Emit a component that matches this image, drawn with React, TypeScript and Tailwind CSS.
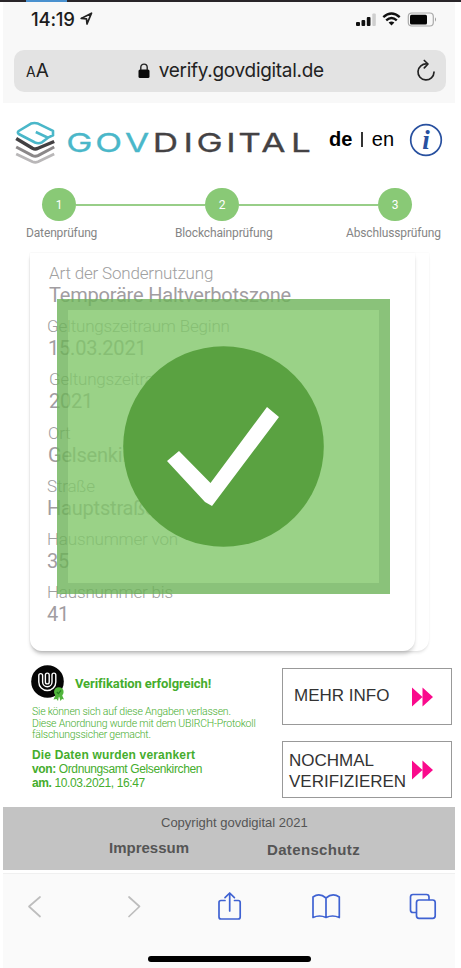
import React from "react";

type Field = { label: string; value: string; lx: string; vx: string };

const fields: Field[] = [
  { label: "Art der Sondernutzung", value: "Temporäre Haltverbotszone", lx: "pl-[19px]", vx: "pl-[19px]" },
  { label: "Geltungszeitraum Beginn", value: "15.03.2021", lx: "pl-[17px]", vx: "pl-[18px]" },
  { label: "Geltungszeitraum Ende", value: "2021", lx: "pl-[19px]", vx: "pl-[19px]" },
  { label: "Ort", value: "Gelsenkirchen", lx: "pl-[18px]", vx: "pl-[18px]" },
  { label: "Straße", value: "Hauptstraße", lx: "pl-[17px]", vx: "pl-[17px]" },
  { label: "Hausnummer von", value: "35", lx: "pl-[17px]", vx: "pl-[17px]" },
  { label: "Hausnummer bis", value: "41", lx: "pl-[17px]", vx: "pl-[17px]" },
];

function StatusBar() {
  return (
    <div className="flex h-[35px] items-center pl-[28px] pr-[17px]">
      <span className="text-[18.5px] leading-[35px] font-medium tracking-[-0.2px] text-[#1c1c1c]">14:19</span>
      <svg className="ml-[5px]" width="13" height="14" viewBox="0 0 13 14" fill="none">
        <path d="M1.2 6.4 L11.5 1.2 L7 12 L6.5 6.9 Z" stroke="#222" strokeWidth="1.7" strokeLinejoin="round" />
      </svg>
      <svg className="ml-auto" width="84" height="18" viewBox="0 0 84 18">
        <rect x="2" y="12" width="4" height="4" rx="1" fill="#111" />
        <rect x="7.5" y="10" width="3.7" height="6" rx="1" fill="#111" />
        <rect x="12.8" y="7" width="3.7" height="9" rx="1" fill="#111" />
        <rect x="18.3" y="3.5" width="3.5" height="12.5" rx="1" fill="#cfcfcf" />
        <g fill="none" stroke="#111" strokeWidth="2.4">
          <path d="M29.3 7.2 Q37.5 -0.2 45.7 7.2" />
          <path d="M32.2 10.4 Q37.5 5.6 42.8 10.4" />
        </g>
        <path d="M34.6 12.6 Q37.5 10.2 40.4 12.6 L37.5 15.6 Z" fill="#111" />
        <rect x="54.3" y="3" width="25" height="13" rx="3.5" fill="#f8f8f8" stroke="#aaa" strokeWidth="1.2" />
        <rect x="56" y="4.8" width="17" height="9.6" rx="1.5" fill="#050505" />
        <path d="M81 7.3 q2 2.2 0 4.4 z" fill="#999" />
      </svg>
    </div>
  );
}

function AddressBar() {
  return (
    <div className="mx-[11px] mt-[13px] mr-[9px] flex h-[42px] items-center rounded-[10px] bg-[#e3e3e3] pr-[10px] pl-[12px] text-[#222]">
      <span className="flex items-baseline">
        <span className="text-[14px] leading-none">A</span>
        <span className="text-[19px] leading-none">A</span>
      </span>
      <svg className="ml-[89px]" width="12" height="16" viewBox="0 0 12 16">
        <rect x="0.5" y="6.5" width="11" height="8.5" rx="1.5" fill="#0a0a0a" />
        <path d="M2.8 7 V4.3 a3.2 3.2 0 0 1 6.4 0 V7" fill="none" stroke="#222" strokeWidth="1.4" />
      </svg>
      <span className="ml-[9px] text-[19px] leading-[42px] tracking-[-0.3px] whitespace-nowrap">verify.govdigital.de</span>
      <svg className="ml-auto" width="20" height="24" viewBox="0 0 20 24" fill="none" stroke="#222" strokeWidth="1.7" strokeLinecap="round" strokeLinejoin="round">
        <path d="M10.8 5 A8 8 0 1 0 18 13.2" />
        <path d="M8.3 1.500 L12 5 L8.300 8.800" />
      </svg>
    </div>
  );
}

function Logo() {
  return (
    <svg width="300" height="48" viewBox="14 118 300 48" className="shrink-0">
      <g fill="none" strokeLinejoin="round">
        <path d="M16.2 154 L32.5 161.8 Q35.3 163 38 161.800 L54.2 154" stroke="#b9b7b8" strokeWidth="2.8" />
        <path d="M16.2 147 L32.5 155.6 Q35.3 156.900 38 155.600 L54.2 147" stroke="#8b8889" strokeWidth="3" />
        <path d="M16.2 138.500 L32.5 148.300 Q35.3 149.700 38 148.300 L54.2 141.500" stroke="#424042" strokeWidth="3.4" />
        <path d="M53 136 V130.800 L38 123.600 Q34.500 122.500 31 123.600 L18.700 131 Q17 132.400 18.700 134 L35 142.500 Q38.500 144 42 142.300 L48 137.700 L35.800 132 M48 137.700 L53.500 135" stroke="#4ab7c9" strokeWidth="2.6" />
      </g>
      <g fontFamily="Inter, sans-serif" fontSize="26" fontWeight="400" transform="scale(1.35 1)">
        <text x="49 70.6 92.6" y="152.2" fill="#4ab7c9" stroke="#4ab7c9" strokeWidth="0.3">GOV</text>
        <text x="113.2 136 145.6 167.600 176.500 193.600 215.600" y="152.2" fill="#444244" stroke="#444244" strokeWidth="0.3">DIGITAL</text>
      </g>
    </svg>
  );
}

function Brand() {
  return (
    <div className="flex h-[76px] pt-[6px] pl-[11px]">
      <Logo />
      <div className="ml-[15px] flex h-[42px] items-center gap-[9px] font-['Liberation_Sans',Arial,sans-serif] text-[20px] text-black">
        <span className="font-bold">de</span>
        <span className="h-[15px] w-[1.5px] bg-[#333]" />
        <span>en</span>
      </div>
      <svg className="mt-[4px] ml-[14px] shrink-0" width="36" height="36" viewBox="0 0 36 36">
        <circle cx="18" cy="18" r="15.3" fill="none" stroke="#28509f" strokeWidth="1.7" />
        <text x="18" y="26.5" textAnchor="middle" fill="#28509f" fontFamily="'Liberation Serif', serif" fontStyle="italic" fontWeight="700" fontSize="27">i</text>
      </svg>
    </div>
  );
}

function Dot({ n }: { n: number }) {
  return (
    <span className="flex h-[33px] w-[34px] shrink-0 items-center justify-center rounded-full bg-[#89c976] pt-px text-[12px] text-white">{n}</span>
  );
}

function Stepper() {
  return (
    <div className="font-[Roboto,sans-serif]">
      <div className="flex h-[33px] items-center pl-[39px]">
        <Dot n={1} />
        <span className="h-[2px] w-[129px] bg-[#98ce88]" />
        <Dot n={2} />
        <span className="h-[2px] w-[139px] bg-[#98ce88]" />
        <Dot n={3} />
      </div>
      <div className="mt-[4px] flex h-[16px] text-[12px] leading-[16px] tracking-[-0.14px] whitespace-nowrap text-[#858585]">
        <span className="ml-[23px] w-[149px]">Datenprüfung</span>
        <span className="w-[171px]">Blockchainprüfung</span>
        <span>Abschlussprüfung</span>
      </div>
    </div>
  );
}

function ResultCard() {
  return (
    <div className="relative mt-[12px] ml-[27px] h-[398px] w-[399px] rounded-b-[12px] bg-white shadow-[0_3px_3px_-1px_rgba(0,0,0,0.1),0_0_2px_rgba(0,0,0,0.05)]">
      <div className="h-[398px] w-[385px] rounded-b-[12px] bg-white pt-[10px] font-[Roboto,sans-serif] whitespace-nowrap shadow-[0_4px_4px_-1px_rgba(0,0,0,0.18),0_0_2px_rgba(0,0,0,0.06)]">
        {fields.map((f) => (
          <div key={f.label} className="h-[53.2px]">
            <div className={`h-[21px] text-[17px] leading-[21px] font-light tracking-[-0.18px] text-[#a0a0a0] ${f.lx}`}>{f.label}</div>
            <div className={`text-[20px] leading-[22px] tracking-[-0.2px] text-[#a19da1] ${f.vx}`}>{f.value}</div>
          </div>
        ))}
      </div>
      <div className="absolute top-[46px] left-[27px] h-[295px] w-[333px] border-[11px] border-[#6db359] bg-[#81c76a] opacity-80" />
      <svg className="absolute top-[93px] left-[93px]" width="202" height="202" viewBox="123 346 202 202">
        <circle cx="223.5" cy="446.5" r="100.3" fill="#5aa241" />
        <path d="M167 461 L179 451 L210.5 483 L267 407 L279 417 L212 506 L205 502 Z" fill="#fff" />
      </svg>
    </div>
  );
}

function UbirchBadge() {
  return (
    <svg width="36" height="36" viewBox="0 0 36 36" className="shrink-0">
      <circle cx="16.5" cy="16.5" r="16.3" fill="#050505" />
      <g fill="none" strokeLinecap="round">
        <path d="M9.700 10.5 V17 a6.600 6.600 0 0 0 13.200 0 V10 M16.300 10 V17" stroke="#fff" strokeWidth="5.200" />
        <path d="M9.700 10.5 V17 a6.600 6.600 0 0 0 13.200 0 V10 M16.300 10 V17" stroke="#050505" strokeWidth="2.400" />
      </g>
      <path d="M25 29 L22.5 34.5 L25.5 34 L27 36 L28 31 L29.5 36 L31 34 L33 34.5 L30.5 29 Z" fill="#50b53b" />
      <circle cx="27.8" cy="27" r="4.8" fill="#50b53b" />
      <path d="M25.8 27 L27.4 28.6 L30 25.4" fill="none" stroke="#247c20" strokeWidth="1.2" />
    </svg>
  );
}

function Arrows() {
  return (
    <svg width="21" height="20" viewBox="0 0 21 20" fill="#fa0a8c">
      <path d="M0 0.5 L10.5 10 L0 19.5 Z M10.5 0.5 L21 10 L10.5 19.5 Z" />
    </svg>
  );
}

function Verification() {
  return (
    <div className="mt-[14px] flex h-[142px] pl-[28px] text-[#45ad2d]">
      <div className="w-[251px] whitespace-nowrap">
        <div className="flex items-center font-[Roboto,sans-serif]">
          <UbirchBadge />
          <span className="ml-[8px] pt-[2px] text-[13px] font-bold tracking-[-0.1px]">Verifikation erfolgreich!</span>
        </div>
        <div className="mt-[5px] pl-[1px] font-[Roboto,sans-serif] text-[10.5px] leading-[11.5px] font-light tracking-[-0.22px]">
          <div>Sie können sich auf diese Angaben verlassen.</div>
          <div>Diese Anordnung wurde mit dem UBIRCH-Protokoll</div>
          <div>fälschungssicher gemacht.</div>
        </div>
        <div className="mt-[7px] pl-[1px] font-['Liberation_Sans',Arial,sans-serif] text-[12px] leading-[14px] tracking-[-0.38px]">
          <div className="font-bold tracking-[0.17px]">Die Daten wurden verankert</div>
          <div><b>von:</b> Ordnungsamt Gelsenkirchen</div>
          <div><b>am.</b> 10.03.2021, 16:47</div>
        </div>
      </div>
      <div className="flex flex-col gap-[16px] pt-[3px] font-['Liberation_Sans',Arial,sans-serif] text-[17px] leading-[21px] text-[#333]">
        <button className="flex h-[57px] w-[170px] items-center justify-between border border-[#999] pr-[18px] pl-[11px] text-left">
          <span className="pb-[3px]">MEHR INFO</span>
          <Arrows />
        </button>
        <button className="flex h-[57px] w-[170px] items-center justify-between border border-[#999] pr-[18px] pl-[6px] text-left">
          <span className="w-[120px] pt-[3px]">NOCHMAL<br />VERIFIZIEREN</span>
          <Arrows />
        </button>
      </div>
    </div>
  );
}

function Footer() {
  return (
    <footer className="h-[63px] bg-[#c3c3c3] pt-[8px] font-['Liberation_Sans',Arial,sans-serif] text-[#555]">
      <div className="pl-[158px] text-[13px] leading-[16px]">Copyright govdigital 2021</div>
      <div className="flex pl-[106px] text-[15px] leading-[18px] font-bold">
        <span className="w-[158px] pt-[8px]">Impressum</span>
        <span className="pt-[10px] tracking-[0.35px]">Datenschutz</span>
      </div>
    </footer>
  );
}

function Toolbar() {
  return (
    <div className="mt-[3px] h-[95px] border-t border-[#f0f0f0] bg-[#fafafa] pt-[17px]">
      <svg width="452" height="34" viewBox="3 891 452 34" fill="none" strokeWidth="1.7" strokeLinecap="round" strokeLinejoin="round">
        <g stroke="#bdbdbd">
          <path d="M40 897 L29 906.5 L40 916.5" />
          <path d="M129 897 L139.500 906.5 L129 916.500" />
        </g>
        <g stroke="#3f62d2">
          <path d="M225 900.500 H221 a2 2 0 0 0 -2 2 V917 a2 2 0 0 0 2 2 H238.200 a2 2 0 0 0 2 -2 V902.500 a2 2 0 0 0 -2 -2 H234.500" />
          <path d="M229.700 911 V893.500 M225 897.700 L229.700 893 L234.400 897.700" />
          <path d="M326 898 Q319.500 892.500 313 897 V917.500 Q319.500 914.500 326 917.500 Q332.500 914.500 339.300 917.500 V897 Q332.500 892.500 326 898 V917.500" />
          <path d="M416 912.500 H413 a2.500 2.500 0 0 1 -2.500 -2.500 V897 a2.500 2.500 0 0 1 2.500 -2.500 H426.500 a2.500 2.500 0 0 1 2.500 2.500 V899.500" />
          <rect x="416.500" y="900" width="18.700" height="18.300" rx="2.500" />
        </g>
      </svg>
      <div className="mt-[31px] ml-[145px] h-[6px] w-[163px] rounded-full bg-black" />
    </div>
  );
}

export default function App() {
  return (
    <div className="h-[968px] w-[461px] overflow-hidden bg-white font-[Inter,sans-serif]">
      <div className="h-[1.5px] bg-[#292529] pl-[26px]">
        <div className="h-full w-[41px] bg-[#4a91cf]" />
      </div>
      <div className="ml-[3px] w-[452px]">
        <header className="h-[101.5px] bg-[#f8f8f8]">
          <StatusBar />
          <AddressBar />
        </header>
        <div className="h-[9px]" />
        <Brand />
        <Stepper />
        <ResultCard />
        <Verification />
        <Footer />
        <Toolbar />
      </div>
    </div>
  );
}
